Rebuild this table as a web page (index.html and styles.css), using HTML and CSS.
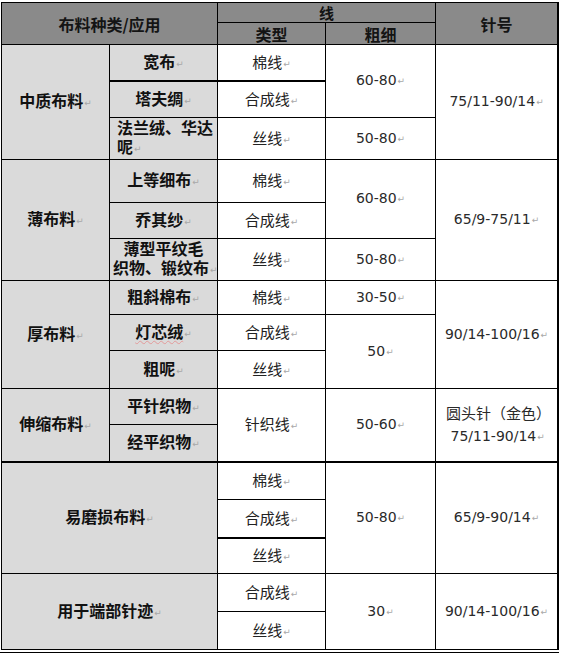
FILE: index.html
```html
<!DOCTYPE html>
<html lang="zh">
<head>
<meta charset="utf-8">
<title>布料与针线对照表</title>
<link rel="stylesheet" href="styles.css">
</head>
<body>
<table class="sheet">
  <colgroup>
    <col class="c1"><col class="c2"><col class="c3"><col class="c4"><col class="c5">
  </colgroup>
  <tr class="h1">
    <th class="hd" colspan="2" rowspan="2">布料种类/应用</th>
    <th class="hd hx" colspan="2">线</th>
    <th class="hd hz" rowspan="2">针号</th>
  </tr>
  <tr class="h2">
    <th class="hd">类型</th>
    <th class="hd">粗细</th>
  </tr>

  <tr class="r1">
    <td class="grp" rowspan="3">中质布料<span class="pm">↵</span></td>
    <td class="fab thick">宽布<span class="pm">↵</span></td>
    <td class="typ thick">棉线<span class="pm">↵</span></td>
    <td class="num" rowspan="2">60-80<span class="pm">↵</span></td>
    <td class="num" rowspan="3">75/11-90/14<span class="pm">↵</span></td>
  </tr>
  <tr class="r2">
    <td class="fab">塔夫绸<span class="pm">↵</span></td>
    <td class="typ">合成线<span class="pm">↵</span></td>
  </tr>
  <tr class="r3">
    <td class="fab two left">法兰绒、华达<br>呢<span class="pm">↵</span></td>
    <td class="typ">丝线<span class="pm">↵</span></td>
    <td class="num">50-80<span class="pm">↵</span></td>
  </tr>

  <tr class="r4">
    <td class="grp" rowspan="3">薄布料<span class="pm">↵</span></td>
    <td class="fab">上等细布<span class="pm">↵</span></td>
    <td class="typ">棉线<span class="pm">↵</span></td>
    <td class="num" rowspan="2">60-80<span class="pm">↵</span></td>
    <td class="num" rowspan="3">65/9-75/11<span class="pm">↵</span></td>
  </tr>
  <tr class="r5">
    <td class="fab">乔其纱<span class="pm">↵</span></td>
    <td class="typ">合成线<span class="pm">↵</span></td>
  </tr>
  <tr class="r6">
    <td class="fab two">薄型平纹毛<br>织物、锻纹布<span class="pm">↵</span></td>
    <td class="typ">丝线<span class="pm">↵</span></td>
    <td class="num">50-80<span class="pm">↵</span></td>
  </tr>

  <tr class="r7">
    <td class="grp" rowspan="3">厚布料<span class="pm">↵</span></td>
    <td class="fab">粗斜棉布<span class="pm">↵</span></td>
    <td class="typ">棉线<span class="pm">↵</span></td>
    <td class="num">30-50<span class="pm">↵</span></td>
    <td class="num" rowspan="3">90/14-100/16<span class="pm">↵</span></td>
  </tr>
  <tr class="r8">
    <td class="fab"><span class="spell">灯芯绒</span><span class="pm">↵</span></td>
    <td class="typ">合成线<span class="pm">↵</span></td>
    <td class="num" rowspan="2">50<span class="pm">↵</span></td>
  </tr>
  <tr class="r9">
    <td class="fab">粗呢<span class="pm">↵</span></td>
    <td class="typ">丝线<span class="pm">↵</span></td>
  </tr>

  <tr class="r10">
    <td class="grp thick" rowspan="2">伸缩布料<span class="pm">↵</span></td>
    <td class="fab">平针织物<span class="pm">↵</span></td>
    <td class="typ thick" rowspan="2">针织线<span class="pm">↵</span></td>
    <td class="num thick" rowspan="2">50-60<span class="pm">↵</span></td>
    <td class="num needle thick" rowspan="2"><span class="needle-cn">圆头针（金色）</span><br>&nbsp;75/11-90/14<span class="pm">↵</span></td>
  </tr>
  <tr class="r11">
    <td class="fab thick">经平织物<span class="pm">↵</span></td>
  </tr>

  <tr class="r12">
    <td class="grp" colspan="2" rowspan="3">易磨损布料<span class="pm">↵</span></td>
    <td class="typ">棉线<span class="pm">↵</span></td>
    <td class="num" rowspan="3">50-80<span class="pm">↵</span></td>
    <td class="num" rowspan="3">65/9-90/14<span class="pm">↵</span></td>
  </tr>
  <tr class="r13">
    <td class="typ thick">合成线<span class="pm">↵</span></td>
  </tr>
  <tr class="r14">
    <td class="typ">丝线<span class="pm">↵</span></td>
  </tr>

  <tr class="r15">
    <td class="grp" colspan="2" rowspan="2">用于端部针迹<span class="pm">↵</span></td>
    <td class="typ">合成线<span class="pm">↵</span></td>
    <td class="num" rowspan="2">30<span class="pm">↵</span></td>
    <td class="num" rowspan="2">90/14-100/16<span class="pm">↵</span></td>
  </tr>
  <tr class="r16">
    <td class="typ">丝线<span class="pm">↵</span></td>
  </tr>
</table>
<div class="underline"></div>
</body>
</html>
```

FILE: styles.css
```css
html, body {
  margin: 0;
  padding: 0;
  background: #ffffff;
}

body {
  width: 561px;
  height: 653px;
  overflow: hidden;
}

.sheet {
  margin: 2px 0 0 1px;
  width: 558px;
  border-collapse: separate;
  border-spacing: 1px;
  background: #000000;
  border-right: 1px solid #000000;
  table-layout: fixed;
}

.c1, .c2, .c3 { width: 107px; }
.c4 { width: 109px; }
.c5 { width: 121px; }

.sheet th,
.sheet td {
  padding: 0;
  text-align: center;
  vertical-align: middle;
  box-sizing: border-box;
  overflow: visible;
  white-space: nowrap;
}

.h1 { height: 19px; }
.h2 { height: 21px; }
.r1 { height: 36px; }
.r2 { height: 35px; }
.r3 { height: 41px; }
.r4 { height: 42px; }
.r5 { height: 35px; }
.r6 { height: 41px; }
.r7 { height: 33px; }
.r8 { height: 35px; }
.r9 { height: 37px; }
.r10 { height: 35px; }
.r11 { height: 37px; }
.r12 { height: 36px; }
.r13 { height: 38px; }
.r14 { height: 34px; }
.r15 { height: 37px; }
.r16 { height: 37px; }

.hd {
  background: #8a8a8a;
  color: #141414;
  font-family: "Noto Sans CJK SC", sans-serif;
  font-weight: 700;
  font-size: 16px;
  line-height: 18px;
}

.hx { font-size: 15px; line-height: 17px; }
.hz { font-size: 16px; }

.grp,
.fab {
  background: #dadada;
  color: #111111;
  font-family: "Noto Sans CJK SC", sans-serif;
  font-weight: 700;
  font-size: 16px;
  line-height: 19px;
}

.grp { padding-right: 2px; }

.sheet .two {
  padding: 0 3px;
  line-height: 19px;
}

.sheet .left {
  text-align: left;
  padding: 0 3px 0 7px;
}

.typ {
  background: #ffffff;
  color: #222222;
  font-family: "Noto Sans CJK SC", sans-serif;
  font-weight: 400;
  font-size: 15px;
  line-height: 18px;
}

.num {
  background: #ffffff;
  color: #2a2a2a;
  font-family: "DejaVu Sans", "Noto Sans CJK SC", sans-serif;
  font-size: 14px;
  line-height: 19px;
}

.sheet .needle {
  font-size: 14px;
  line-height: 22px;
  padding-left: 10px;
  text-align: left;
}

.needle-cn {
  font-family: "Noto Sans CJK SC", sans-serif;
  font-size: 15px;
}

.thick { border-bottom: 1px solid #000000; }

.pm {
  font-family: "DejaVu Sans", sans-serif;
  font-weight: 400;
  font-size: 9px;
  color: #a8a8a8;
  margin-left: 1px;
  vertical-align: 1px;
}

.spell {
  text-decoration: underline wavy #e39a9a;
  text-decoration-thickness: 1px;
  text-underline-offset: 2px;
}

.underline {
  margin: 2px 0 0 0;
  width: 559px;
  height: 1px;
  background: #000000;
}
```
